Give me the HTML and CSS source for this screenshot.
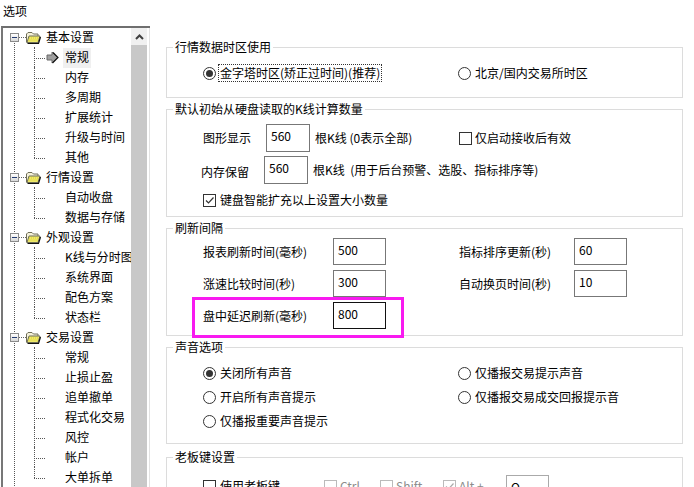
FILE: index.html
```html
<!DOCTYPE html>
<html lang="zh-CN">
<head>
<meta charset="utf-8">
<title>选项</title>
<link rel="stylesheet" href="styles.css">
</head>
<body>
<svg class="defs" width="0" height="0" aria-hidden="true">
  <symbol id="folder" viewBox="0 0 16 14">
    <path d="M1.5 12.500V4L3 2.500h4L8.500 4H13v2" fill="#f4f0d8" stroke="#6e6e58"/>
    <path d="M2 12.500 4 6h11l-2 6.500z" fill="#efe96a" stroke="#6e6e58"/>
    <path d="M4 8h9M3.500 10h9" stroke="#d8cf30" stroke-dasharray="1 1"/>
    <path d="M2.500 13.500h11l2-6.500" fill="none" stroke="#111" stroke-width="1.200"/>
  </symbol>
  <symbol id="arrow" viewBox="0 0 13 13">
    <path d="M1 4h5V1l5.500 5.500L6 12V9H1z" fill="#a0a0a0" stroke="#6a6a6a"/>
    <path d="M6.500 12 12 6.500 7 1.500" fill="none" stroke="#111" stroke-width="1.200"/>
  </symbol>
</svg>
<h1 class="title">选项</h1>
<main class="dialog">
  <nav class="tree">
    <div class="tree-list">
      <div class="node"><span class="expander"></span><svg class="folder"><use href="#folder"/></svg><span>基本设置</span></div>
      <div class="children">
        <div class="leaf"><svg class="arrow"><use href="#arrow"/></svg><span class="selected">常规</span></div>
        <div class="leaf"><span>内存</span></div>
        <div class="leaf"><span>多周期</span></div>
        <div class="leaf"><span>扩展统计</span></div>
        <div class="leaf"><span>升级与时间</span></div>
        <div class="leaf"><span>其他</span></div>
      </div>
      <div class="node"><span class="expander"></span><svg class="folder"><use href="#folder"/></svg><span>行情设置</span></div>
      <div class="children">
        <div class="leaf"><span>自动收盘</span></div>
        <div class="leaf"><span>数据与存储</span></div>
      </div>
      <div class="node"><span class="expander"></span><svg class="folder"><use href="#folder"/></svg><span>外观设置</span></div>
      <div class="children">
        <div class="leaf"><span>K线与分时图</span></div>
        <div class="leaf"><span>系统界面</span></div>
        <div class="leaf"><span>配色方案</span></div>
        <div class="leaf"><span>状态栏</span></div>
      </div>
      <div class="node"><span class="expander"></span><svg class="folder"><use href="#folder"/></svg><span>交易设置</span></div>
      <div class="children">
        <div class="leaf"><span>常规</span></div>
        <div class="leaf"><span>止损止盈</span></div>
        <div class="leaf"><span>追单撤单</span></div>
        <div class="leaf"><span>程式化交易</span></div>
        <div class="leaf"><span>风控</span></div>
        <div class="leaf"><span>帐户</span></div>
        <div class="leaf"><span>大单拆单</span></div>
      </div>
    </div>
    <div class="scrollbar">
      <div class="scroll-btn"><svg width="9" height="6" viewBox="0 0 9 6"><path d="M1 5 4.500 1.500 8 5" fill="none" stroke="#404040" stroke-width="2"/></svg></div>
    </div>
  </nav>
  <div class="settings">
    <section class="group g-zone">
      <h2 class="legend">行情数据时区使用</h2>
      <div class="two-col">
        <label class="opt"><span class="radio on"></span><span class="focus">金字塔时区(矫正过时间)(推荐)</span></label>
        <label class="opt"><span class="radio"></span><span>北京/国内交易所时区</span></label>
      </div>
    </section>
    <section class="group g-count">
      <h2 class="legend">默认初始从硬盘读取的K线计算数量</h2>
      <div class="count-row first">
        <span class="count-label">图形显示</span>
        <span class="field count-field">560</span>
        <span class="count-unit">根K线 (0表示全部)</span>
        <label class="opt only"><span class="check"></span><span>仅启动接收后有效</span></label>
      </div>
      <div class="count-row second">
        <span class="count-label">内存保留</span>
        <span class="field count-field">560</span>
        <span class="count-unit wide">根K线&nbsp; (用于后台预警、选股、指标排序等)</span>
      </div>
      <label class="opt smart"><span class="check checked"><svg width="11" height="11" viewBox="0 0 11 11"><path d="M2 5.500 4.500 8 9.500 2.500" fill="none" stroke="#333" stroke-width="1.200"/></svg></span><span>键盘智能扩充以上设置大小数量</span></label>
    </section>
    <section class="group g-refresh">
      <h2 class="legend">刷新间隔</h2>
      <div class="refresh-grid">
        <span>报表刷新时间(毫秒)</span><span class="field">500</span>
        <span>指标排序更新(秒)</span><span class="field">60</span>
        <span>涨速比较时间(秒)</span><span class="field">300</span>
        <span>自动换页时间(秒)</span><span class="field">10</span>
        <span>盘中延迟刷新(毫秒)</span><span class="field active">800</span>
      </div>
      <div class="highlight"></div>
    </section>
    <section class="group g-sound">
      <h2 class="legend">声音选项</h2>
      <div class="two-col sound-grid">
        <label class="opt"><span class="radio on"></span><span>关闭所有声音</span></label>
        <label class="opt"><span class="radio"></span><span>仅播报交易提示声音</span></label>
        <label class="opt"><span class="radio"></span><span>开启所有声音提示</span></label>
        <label class="opt"><span class="radio"></span><span>仅播报交易成交回报提示音</span></label>
        <label class="opt"><span class="radio"></span><span>仅播报重要声音提示</span></label>
      </div>
    </section>
    <section class="group g-boss">
      <h2 class="legend">老板键设置</h2>
      <div class="boss-row">
        <label class="opt boss-main"><span class="check"></span><span>使用老板键</span></label>
        <label class="opt dis ctrl"><span class="check"></span><span>Ctrl</span></label>
        <label class="opt dis shift"><span class="check"></span><span>Shift</span></label>
        <label class="opt dis alt"><span class="check checked"><svg width="11" height="11" viewBox="0 0 11 11"><path d="M2 5.500 4.500 8 9.500 2.500" fill="none" stroke="#aaa" stroke-width="1.200"/></svg></span><span>Alt +</span></label>
        <span class="field boss-key">Q</span>
      </div>
    </section>
  </div>
</main>
</body>
</html>
```
FILE: styles.css
```css
* { box-sizing: border-box; }
html, body { margin: 0; padding: 0; }
body {
  width: 694px;
  height: 487px;
  overflow: hidden;
  background: #fff;
  color: #000;
  font: 12px/16px "Noto Sans CJK SC", "Noto Sans", sans-serif;
}
.defs { position: absolute; }
.title {
  margin: 0;
  padding: 3px 0 0 3px;
  height: 26px;
  font-size: 12px;
  font-weight: 400;
  line-height: 16px;
}
.dialog { display: flex; height: 461px; overflow: hidden; }

/* tree */
.tree {
  display: flex;
  width: 149px;
  height: 461px;
  margin-left: 1px;
  padding-right: 1px;
  border-top: 2px solid #6f6f6f;
  border-left: 2px solid #777;
  flex: none;
  overflow: hidden;
  box-shadow: inset -1px 0 0 #e2e2e2;
}
.tree-list {
  width: 128px;
  flex: none;
  margin-top: -1px;
  overflow: hidden;
  white-space: nowrap;
  background: repeating-linear-gradient(#555 0 1px, transparent 1px 2px) 11px 16px / 1px 100% no-repeat;
}
.node {
  display: flex;
  align-items: center;
  height: 20px;
}
.expander {
  position: relative;
  width: 9px;
  height: 9px;
  margin-left: 7px;
  border: 1px solid #8a8a8a;
  background: linear-gradient(#fff, #d8d8d8);
  flex: none;
}
.expander::before {
  content: "";
  position: absolute;
  left: 1px;
  top: 3px;
  width: 5px;
  height: 1px;
  background: #223a70;
}
.expander::after {
  content: "";
  position: absolute;
  left: 8px;
  top: 3px;
  width: 7px;
  border-top: 1px dotted #666;
}
.folder { width: 16px; height: 14px; margin: 0 5px 0 6px; flex: none; }
.children { margin-left: 31px; }
.leaf {
  position: relative;
  height: 20px;
  line-height: 20px;
  padding-left: 31px;
}
.leaf::before {
  content: "";
  position: absolute;
  left: 0;
  top: 11px;
  width: 11px;
  border-top: 1px dotted #555;
}
.leaf::after {
  content: "";
  position: absolute;
  left: 0;
  top: 0;
  bottom: 0;
  border-left: 1px dotted #555;
}
.leaf:last-child::after { bottom: 9px; }
.arrow { position: absolute; left: 12px; top: 4px; width: 13px; height: 13px; }
.selected {
  display: inline-block;
  vertical-align: top;
  background: #f0f0f0;
  height: 20px;
  padding: 0 2px;
  margin: 1px 0 0 -2px;
  line-height: 18px;
}
.scrollbar { width: 16px; flex: none; background: #c8c8c8; }
.scroll-btn {
  height: 17px;
  background: #f0f0f0;
  display: flex;
  align-items: center;
  justify-content: center;
}

/* settings panel */
.settings {
  flex: none;
  width: 518px;
  margin-left: 16px;
  padding-top: 21px;
}
.group {
  position: relative;
  width: 517px;
  border: 1px solid #dcdcdc;
  margin-bottom: 11px;
}
.legend {
  margin: -9px 0 0 6px;
  padding: 0 2px;
  width: fit-content;
  background: #fff;
  font-size: 12px;
  font-weight: 400;
  line-height: 16px;
}
.g-zone { height: 51px; }
.g-count { height: 108px; }
.g-refresh { height: 108px; }
.g-sound { height: 97px; margin-bottom: 13px; }
.g-boss { height: 60px; }

.opt { display: flex; align-items: center; gap: 4px; height: 16px; white-space: nowrap; }
.radio, .check { display: flex; flex: none; width: 13px; height: 13px; border: 1px solid #333; background: #fff; }
.radio { border-radius: 50%; }
.radio.on { position: relative; }
.radio.on::after {
  content: "";
  position: absolute;
  left: 2px;
  top: 2px;
  width: 7px;
  height: 7px;
  border-radius: 50%;
  background: #333;
}
.check { align-items: center; justify-content: center; }
.focus { outline: 1px dotted #333; padding: 0 1px; margin-left: -1px; }

.two-col {
  display: grid;
  grid-template-columns: 255px 1fr;
  padding-left: 36px;
  margin-top: 10px;
}
.sound-grid { row-gap: 8px; }

.count-row { display: flex; align-items: center; }
.count-row.first { margin-top: 7px; padding-left: 36px; }
.count-row.second { margin-top: 4px; padding-left: 34px; }
.count-label { width: 63px; flex: none; }
.second .count-label { padding-top: 3px; }
.field {
  display: block;
  border: 1px solid #777;
  background: #fff;
  padding: 3px 0 0 4px;
  line-height: 16px;
}
.count-field { width: 44px; height: 28px; flex: none; }
.count-unit { width: 144px; margin-left: 5px; flex: none; white-space: nowrap; }
.count-unit.wide { width: auto; }
.only { gap: 3px; }
.smart { margin: 8px 0 0 36px; }

.refresh-grid {
  display: grid;
  grid-template-columns: 130px 53px 73px 115px 53px;
  grid-auto-rows: 27px;
  row-gap: 5px;
  align-items: center;
  padding-left: 36px;
  margin-top: 2px;
}
.refresh-grid .field { height: 27px; }
.refresh-grid > :nth-child(3) { grid-column: 4; }
.refresh-grid > :nth-child(4) { grid-column: 5; }
.refresh-grid > :nth-child(7) { grid-column: 4; }
.refresh-grid > :nth-child(8) { grid-column: 5; }
.field.active { border-color: #111; }
.highlight {
  position: absolute;
  left: 25px;
  top: 68px;
  width: 212px;
  height: 41px;
  border: 3px solid #f81af0;
}

.boss-row { display: flex; align-items: flex-start; padding-left: 36px; margin-top: 10px; }
.boss-row .opt { margin-top: 3px; }
.boss-main { width: 121px; }
.dis { color: #8c8c8c; gap: 3px; }
.dis .check { border-color: #bbb; }
.ctrl { width: 56px; }
.shift { width: 63px; }
.alt { width: 63px; }
.boss-key { width: 43px; height: 26px; border-color: #aaa; }
```
